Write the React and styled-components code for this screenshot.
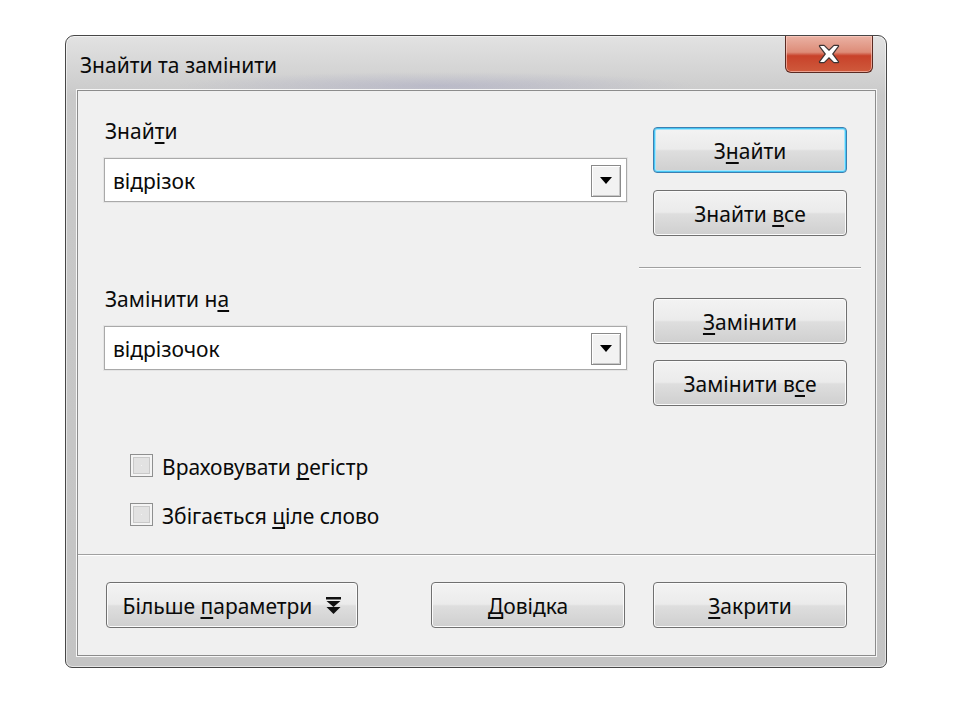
import React from "react";
import styled, { createGlobalStyle, css } from "styled-components";

const Global = createGlobalStyle`
  html, body { margin: 0; padding: 0; background: #ffffff; }
  body { font-family: "Noto Sans", "Open Sans", Arial, sans-serif; }
  * { box-sizing: border-box; }
`;

const Page = styled.div`
  width: 960px;
  height: 720px;
  padding: 35px 0 0 65px;
`;

const Window = styled.div`
  width: 822px;
  height: 633px;
  border: 1px solid #474747;
  border-radius: 9px 9px 7px 7px;
  background: linear-gradient(180deg, #e2e2e2 0px, #d2d2d2 40px, #c9c9c9 60px, #c4c4c4 100%);
  box-shadow: inset 0 0 0 1px rgba(255, 255, 255, 0.55);
  padding: 0 10px 11px 11px;
  display: flex;
  flex-direction: column;
`;

const TitleBar = styled.div`
  height: 54px;
  display: flex;
  align-items: flex-start;
  justify-content: space-between;
  background: radial-gradient(ellipse 260px 14px at 360px 50px, rgba(150, 150, 190, 0.35), transparent);
`;

const Title = styled.div`
  margin: 16px 0 0 3px;
  font-size: 21px;
  line-height: 26px;
  color: #0a0a0a;
`;

const CloseButton = styled.div`
  width: 88px;
  height: 37px;
  margin-right: 3px;
  border: 1px solid #5a2a22;
  border-top: none;
  border-radius: 0 0 6px 6px;
  background: linear-gradient(180deg, #eab2a4 0%, #dd8c78 45%, #c8422a 55%, #cf5a3c 100%);
  box-shadow: inset 0 0 0 1px rgba(255, 210, 200, 0.6);
  display: flex;
  align-items: center;
  justify-content: center;
`;

const Client = styled.div`
  flex: 1;
  border: 1px solid #8c8c8c;
  background: #f0f0f0;
  box-shadow: 0 0 0 1px #f6f6f6;
  display: flex;
  flex-direction: column;
`;

const Upper = styled.div`
  height: 463px;
  display: flex;
  padding-left: 26px;
`;

const LeftCol = styled.div`
  width: 523px;
  padding-top: 27px;
  display: flex;
  flex-direction: column;
`;

const Label = styled.div`
  font-size: 21px;
  line-height: 26px;
  color: #0a0a0a;
  margin-top: ${(p) => p.$top || 0}px;
  margin-bottom: 14px;
  padding-left: 1px;
`;

const U = styled.span`
  text-decoration: underline;
  text-underline-offset: 3px;
  text-decoration-thickness: 1.5px;
  text-decoration-skip-ink: none;
`;

const Combo = styled.div`
  height: 44px;
  border: 1px solid #a9a9a9;
  box-shadow: 0 0 0 1px #e4e4e4;
  background: #ffffff;
  display: flex;
  align-items: center;
  justify-content: space-between;
  padding: 1px 5px 0 8px;
  font-size: 21px;
  color: #0a0a0a;
`;

const DropButton = styled.div`
  width: 30px;
  height: 32px;
  border: 1px solid #8a8a8a;
  background: #f2f2f2;
  box-shadow: inset 1px 1px 0 #ffffff, inset -1px -1px 0 #c8c8c8;
  display: flex;
  align-items: center;
  justify-content: center;
`;

const CheckRow = styled.div`
  display: flex;
  align-items: center;
  gap: 9px;
  margin-top: ${(p) => p.$top}px;
  margin-left: 26px;
  height: 23px;
  font-size: 21px;
  color: #0a0a0a;
`;

const CheckText = styled.span`
  padding-top: 3px;
`;

const CheckBox = styled.div`
  width: 23px;
  height: 23px;
  flex: none;
  border: 1px solid #8e8f8f;
  background: #f4f4f4;
  box-shadow: inset 0 0 0 2px #f4f4f4, inset 0 0 0 3px #c9c9c9, inset 0 0 0 10px #e2e2e2;
`;

const RightCol = styled.div`
  margin-left: 26px;
  width: 194px;
  padding-top: 36px;
  display: flex;
  flex-direction: column;
`;

const Button = styled.div`
  width: ${(p) => p.$w || 194}px;
  height: 46px;
  margin-top: ${(p) => p.$top || 0}px;
  padding-top: 1px;
  border: 1px solid #707070;
  border-radius: 4px;
  background: linear-gradient(180deg, #f3f3f3 0%, #ebebeb 48%, #dedede 52%, #cfcfcf 100%);
  box-shadow: inset 0 0 0 1px #fbfbfb;
  display: flex;
  align-items: center;
  justify-content: center;
  gap: 14px;
  font-size: 21px;
  color: #0a0a0a;
  ${(p) =>
    p.$default &&
    css`
      border-color: #3c7fb1;
      box-shadow: inset 0 0 0 1px #48c8f5, inset 0 0 0 2px #a8e4fa;
    `}
`;

const Separator = styled.div`
  width: 222px;
  margin: 31px 0 0 -14px;
  height: 2px;
  border-top: 1px solid #a0a0a0;
  border-bottom: 1px solid #ffffff;
`;

const Footer = styled.div`
  flex: 1;
  border-top: 1px solid #a0a0a0;
  box-shadow: inset 0 1px 0 #ffffff;
  display: flex;
  align-items: flex-start;
  justify-content: space-between;
  padding: 27px 28px 0 28px;
`;

const FooterGroup = styled.div`
  display: flex;
  gap: 28px;
`;

function CloseX() {
  return (
    <svg width="28" height="22" viewBox="0 0 28 22">
      <path
        d="M5 3 L9 3 L14 8 L19 3 L23 3 L17 11 L23 19 L19 19 L14 14 L9 19 L5 19 L11 11 Z"
        fill="#ffffff"
        stroke="#3e3434"
        strokeWidth="2.4"
        strokeLinejoin="round"
        paintOrder="stroke"
      />
    </svg>
  );
}

function Triangle() {
  return (
    <svg width="12" height="7" viewBox="0 0 12 7">
      <path d="M0 0 L12 0 L6 7 Z" fill="#000" />
    </svg>
  );
}

function DoubleArrow() {
  return (
    <svg width="15" height="17" viewBox="0 0 15 17">
      <rect x="0" y="0" width="15" height="2.5" fill="#111" />
      <path d="M0.5 4 L14.5 4 L7.5 10 Z" fill="#111" />
      <path d="M0.5 10 L14.5 10 L7.5 17 Z" fill="#111" />
    </svg>
  );
}

export default function App() {
  return (
    <>
      <Global />
      <Page>
        <Window>
          <TitleBar>
            <Title>Знайти та замінити</Title>
            <CloseButton>
              <CloseX />
            </CloseButton>
          </TitleBar>
          <Client>
            <Upper>
              <LeftCol>
                <Label>
                  Знай<U>т</U>и
                </Label>
                <Combo>
                  <span>відрізок</span>
                  <DropButton>
                    <Triangle />
                  </DropButton>
                </Combo>
                <Label $top={84}>
                  Замінити н<U>а</U>
                </Label>
                <Combo>
                  <span>відрізочок</span>
                  <DropButton>
                    <Triangle />
                  </DropButton>
                </Combo>
                <CheckRow $top={84}>
                  <CheckBox />
                  <CheckText>
                    Враховувати <U>р</U>егістр
                  </CheckText>
                </CheckRow>
                <CheckRow $top={26}>
                  <CheckBox />
                  <CheckText>
                    Збігається <U>ц</U>іле слово
                  </CheckText>
                </CheckRow>
              </LeftCol>
              <RightCol>
                <Button $default>
                  <span>
                    З<U>н</U>айти
                  </span>
                </Button>
                <Button $top={17}>
                  <span>
                    Знайти <U>в</U>се
                  </span>
                </Button>
                <Separator />
                <Button $top={29}>
                  <span>
                    <U>З</U>амінити
                  </span>
                </Button>
                <Button $top={16}>
                  <span>
                    Замінити в<U>с</U>е
                  </span>
                </Button>
              </RightCol>
            </Upper>
            <Footer>
              <Button $w={252}>
                <span>
                  Більше <U>п</U>араметри
                </span>
                <DoubleArrow />
              </Button>
              <FooterGroup>
                <Button>
                  <span>
                    <U>Д</U>овідка
                  </span>
                </Button>
                <Button>
                  <span>
                    <U>З</U>акрити
                  </span>
                </Button>
              </FooterGroup>
            </Footer>
          </Client>
        </Window>
      </Page>
    </>
  );
}
